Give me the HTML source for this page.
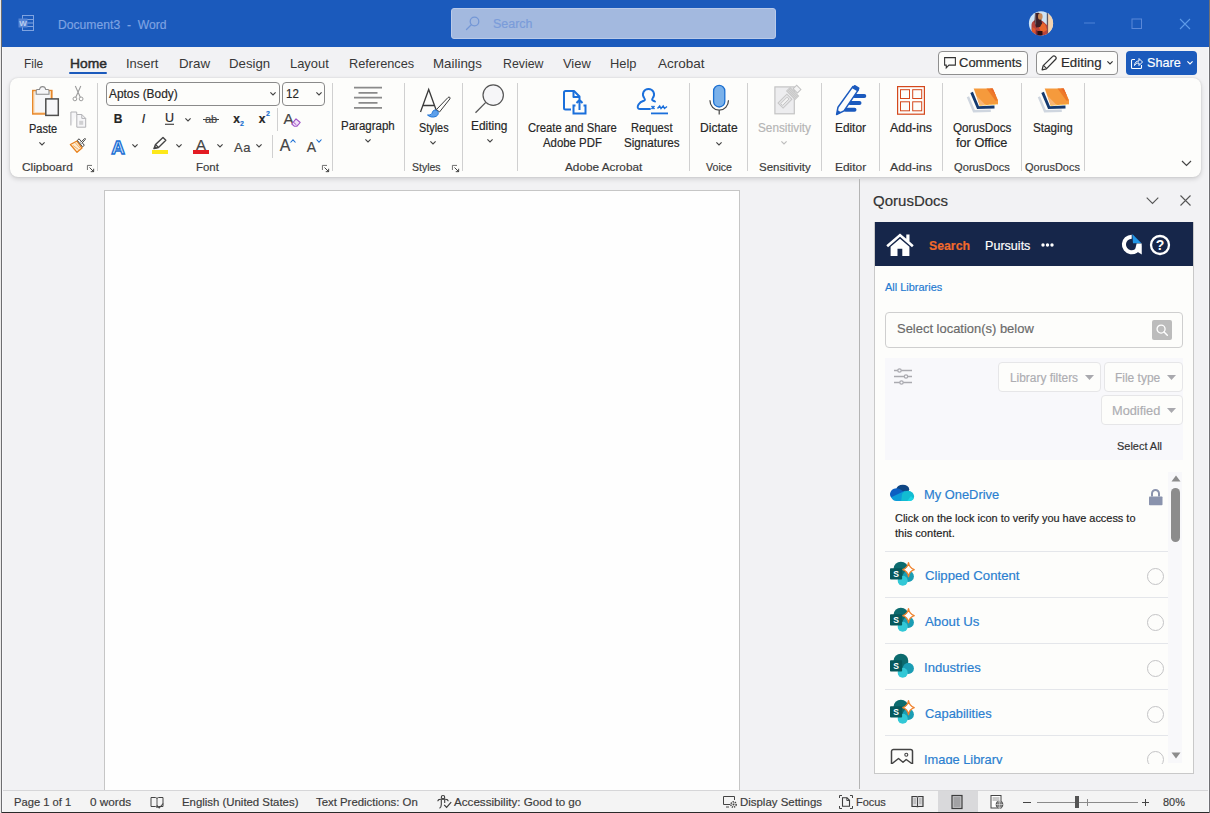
<!DOCTYPE html>
<html><head><meta charset="utf-8"><title>Document3 - Word</title>
<style>
*{box-sizing:border-box;margin:0;padding:0}
html,body{width:1210px;height:813px;overflow:hidden;background:#f2f2f4;font-family:"Liberation Sans",sans-serif;}
#win{position:absolute;left:0;top:0;width:1210px;height:813px;background:#f2f2f4;overflow:hidden}
.a{position:absolute;white-space:nowrap}
.t{position:absolute;white-space:nowrap;line-height:1;color:#262626;-webkit-text-stroke:.18px currentColor}
.chev{position:absolute;width:6px;height:3.600px}
svg{overflow:visible}
</style></head><body>
<div id="win"><div class="a" style="left:2px;top:0px;width:1207px;height:47px;background:#1b5abc"></div><svg class="a" style="left:18px;top:14px" width="17" height="18" viewBox="0 0 17 18"><rect x="4.500" y="1.500" width="11" height="15" fill="none" stroke="#7fa3e0" stroke-width="1"/><path d="M9 5.500h6M9 9h6M9 12.500h6" stroke="#7fa3e0" stroke-width="1"/><rect x="0.500" y="4.500" width="9" height="9" fill="#5584d4"/><text x="5" y="12" font-size="8" font-weight="bold" fill="#b9cdf0" text-anchor="middle" font-family="Liberation Sans, sans-serif">W</text></svg><span class="t " style="font-size:12.5px;top:25px;color:#7fa3e2;left:57.62px;transform-origin:0 50%;transform:translateY(-50%) scaleX(0.972);">Document3&nbsp; -&nbsp; Word</span><div class="a" style="left:451px;top:8px;width:325px;height:31px;background:#a3b9df;border:1px solid #b9cae9;border-radius:3px"></div><svg class="a" style="left:465px;top:15px" width="16" height="16" viewBox="0 0 16 16"><circle cx="9.500" cy="6.500" r="4.300" fill="none" stroke="#7497d6" stroke-width="1.300"/><path d="M6.300 9.700L1.500 14.500" stroke="#7497d6" stroke-width="1.300" stroke-linecap="round"/></svg><span class="t " style="font-size:12.5px;top:24px;color:#7a9cda;left:492.62px;transform-origin:0 50%;transform:translateY(-50%) scaleX(0.997);">Search</span><svg class="a" style="left:1027px;top:10px" width="28" height="27" viewBox="0 0 28 27"><defs><clipPath id="av"><circle cx="14" cy="13.400" r="12.100"/></clipPath></defs><g clip-path="url(#av)"><rect width="28" height="27" fill="#cfe4f5"/><rect x="21" y="0" width="7" height="27" fill="#f4d4b0"/><rect x="19.800" y="2" width="1.300" height="25" fill="#5c5560"/><path d="M4.500 27V15c0-3 2.500-5 5-5l6 1 5 4.500V27z" fill="#b8443c"/><path d="M12 12l6 2 2 6-5 3-3-5z" fill="#e8662c"/><path d="M5.500 17l3 2-1 4-2.500-1z" fill="#e0582a"/><path d="M9 20l6 3-1 4H9z" fill="#7a2a38"/><path d="M8 3.500c2-1.500 5-1 5.500 1l1.500 9-2 3.500-4 .5-1.500-6z" fill="#3c1f28"/><ellipse cx="13.300" cy="6.500" rx="2.300" ry="3.300" fill="#c98a58"/><path d="M10.500 21h5v4.500h-5z" fill="#2a1014"/><path d="M8.500 3.500v11" stroke="#6a5a60" stroke-width="1.200"/></g></svg><svg class="a" style="left:1084px;top:22px" width="12" height="2"><rect width="11" height="1" y="0.500" fill="#4f82d6"/></svg><svg class="a" style="left:1131px;top:18px" width="12" height="12"><rect x="1" y="1" width="9.500" height="9.500" fill="none" stroke="#5a88d8" stroke-width="1"/></svg><svg class="a" style="left:1179px;top:18px" width="12" height="12"><path d="M1 1l10 10M11 1L1 11" stroke="#5d9be8" stroke-width="1.100"/></svg><span class="t " style="font-size:13px;top:62.5px;color:#383838;left:24.11px;transform-origin:0 50%;transform:translateY(-50%) scaleX(0.916);-webkit-text-stroke:0;">File</span><span class="t " style="font-size:13px;top:62.5px;color:#383838;left:69.61px;transform-origin:0 50%;transform:translateY(-50%) scaleX(1.064);-webkit-text-stroke:.45px #1f1f1f;">Home</span><span class="t " style="font-size:13px;top:62.5px;color:#383838;left:126.11px;transform-origin:0 50%;transform:translateY(-50%) scaleX(0.992);-webkit-text-stroke:0;">Insert</span><span class="t " style="font-size:13px;top:62.5px;color:#383838;left:179.11px;transform-origin:0 50%;transform:translateY(-50%) scaleX(1.025);-webkit-text-stroke:0;">Draw</span><span class="t " style="font-size:13px;top:62.5px;color:#383838;left:229.11px;transform-origin:0 50%;transform:translateY(-50%) scaleX(1.018);-webkit-text-stroke:0;">Design</span><span class="t " style="font-size:13px;top:62.5px;color:#383838;left:290.11px;transform-origin:0 50%;transform:translateY(-50%) scaleX(0.993);-webkit-text-stroke:0;">Layout</span><span class="t " style="font-size:13px;top:62.5px;color:#383838;left:349.11px;transform-origin:0 50%;transform:translateY(-50%) scaleX(0.981);-webkit-text-stroke:0;">References</span><span class="t " style="font-size:13px;top:62.5px;color:#383838;left:433.11px;transform-origin:0 50%;transform:translateY(-50%) scaleX(1.026);-webkit-text-stroke:0;">Mailings</span><span class="t " style="font-size:13px;top:62.5px;color:#383838;left:503.11px;transform-origin:0 50%;transform:translateY(-50%) scaleX(0.947);-webkit-text-stroke:0;">Review</span><span class="t " style="font-size:13px;top:62.5px;color:#383838;left:563.11px;transform-origin:0 50%;transform:translateY(-50%) scaleX(0.991);-webkit-text-stroke:0;">View</span><span class="t " style="font-size:13px;top:62.5px;color:#383838;left:610.11px;transform-origin:0 50%;transform:translateY(-50%) scaleX(0.990);-webkit-text-stroke:0;">Help</span><span class="t " style="font-size:13px;top:62.5px;color:#383838;left:658.11px;transform-origin:0 50%;transform:translateY(-50%) scaleX(1.039);-webkit-text-stroke:0;">Acrobat</span><div class="a" style="left:69px;top:72px;width:38px;height:2px;background:#1b5abc;border-radius:1px"></div><div class="a" style="left:938px;top:51px;width:90px;height:24px;background:#fdfdfb;border:1px solid #8f8f8f;border-radius:4px"></div><svg class="a" style="left:942.500px;top:55.500px" width="14" height="14" viewBox="0 0 13 13"><path d="M1.500 1.500h10v7h-6l-2.500 2.500v-2.500h-1.500z" fill="none" stroke="#333" stroke-width="1"/></svg><span class="t " style="font-size:13px;top:62px;color:#2b2b2b;left:958.61px;transform-origin:0 50%;transform:translateY(-50%) scaleX(0.999);">Comments</span><div class="a" style="left:1036px;top:51px;width:82px;height:24px;background:#fdfdfb;border:1px solid #8f8f8f;border-radius:4px"></div><svg class="a" style="left:1040px;top:53.500px" width="18" height="18" viewBox="0 0 17 17"><path d="M2 15l1-4L12 2.200a1.600 1.600 0 0 1 2.300 0l.5.500a1.600 1.600 0 0 1 0 2.300L6 14z" fill="none" stroke="#333" stroke-width="1.200" stroke-linejoin="round"/><path d="M3.300 10.700l3 3" stroke="#333" stroke-width="1"/></svg><span class="t " style="font-size:13px;top:62px;color:#2b2b2b;left:1060.61px;transform-origin:0 50%;transform:translateY(-50%) scaleX(1.023);">Editing</span><svg class="chev" style="left:1106.5px;top:61.2px" viewBox="0 0 6 3.600"><path d="M.4.400l2.600 2.600 2.600-2.600" fill="none" stroke="#333" stroke-width="1.150"/></svg><div class="a" style="left:1126px;top:51px;width:71px;height:24px;background:#1b5abc;border-radius:4px"></div><svg class="a" style="left:1130px;top:56px" width="14" height="14" viewBox="0 0 14 14"><path d="M5 3.500H2.500a1 1 0 0 0-1 1v7a1 1 0 0 0 1 1h8a1 1 0 0 0 1-1V9" fill="none" stroke="#fff" stroke-width="1.100"/><path d="M4.500 9.500c.3-3 2-4.500 4.500-4.500V2.500L12.500 6 9 9.500V7c-2 0-3.300.6-4.500 2.500z" fill="none" stroke="#fff" stroke-width="1" stroke-linejoin="round"/></svg><span class="t " style="font-size:13px;top:62px;color:#fff;left:1146.61px;transform-origin:0 50%;transform:translateY(-50%) scaleX(0.970);">Share</span><svg class="chev" style="left:1186.5px;top:61.2px" viewBox="0 0 6 3.600"><path d="M.4.400l2.600 2.600 2.600-2.600" fill="none" stroke="#fff" stroke-width="1.150"/></svg><div class="a" style="left:10px;top:78px;width:1191px;height:99px;background:#fdfdfb;border-radius:8px;box-shadow:0 2px 5px rgba(0,0,0,.15),0 0 2px rgba(0,0,0,.12)"></div><div class="a" style="left:97px;top:83px;width:1px;height:88px;background:#d0d0d0"></div><div class="a" style="left:332px;top:83px;width:1px;height:88px;background:#d0d0d0"></div><div class="a" style="left:404px;top:83px;width:1px;height:88px;background:#d0d0d0"></div><div class="a" style="left:462px;top:83px;width:1px;height:88px;background:#d0d0d0"></div><div class="a" style="left:517px;top:83px;width:1px;height:88px;background:#d0d0d0"></div><div class="a" style="left:689px;top:83px;width:1px;height:88px;background:#d0d0d0"></div><div class="a" style="left:747px;top:83px;width:1px;height:88px;background:#d0d0d0"></div><div class="a" style="left:821px;top:83px;width:1px;height:88px;background:#d0d0d0"></div><div class="a" style="left:879px;top:83px;width:1px;height:88px;background:#d0d0d0"></div><div class="a" style="left:942px;top:83px;width:1px;height:88px;background:#d0d0d0"></div><div class="a" style="left:1021px;top:83px;width:1px;height:88px;background:#d0d0d0"></div><div class="a" style="left:1084px;top:83px;width:1px;height:88px;background:#d0d0d0"></div><span class="t " style="font-size:11.5px;top:168.4px;color:#3b3b3b;left:22.46px;transform-origin:0 50%;transform:translateY(-50%) scaleX(1.031);">Clipboard</span><span class="t " style="font-size:11.5px;top:168.4px;color:#3b3b3b;left:195.66px;transform-origin:0 50%;transform:translateY(-50%) scaleX(0.993);">Font</span><span class="t " style="font-size:11.5px;top:168.4px;color:#3b3b3b;left:411.65px;transform-origin:0 50%;transform:translateY(-50%) scaleX(0.914);">Styles</span><span class="t " style="font-size:11.5px;top:168.4px;color:#3b3b3b;left:564.65px;transform-origin:0 50%;transform:translateY(-50%) scaleX(1.024);">Adobe Acrobat</span><span class="t " style="font-size:11.5px;top:168.4px;color:#3b3b3b;left:705.65px;transform-origin:0 50%;transform:translateY(-50%) scaleX(0.922);">Voice</span><span class="t " style="font-size:11.5px;top:168.4px;color:#3b3b3b;left:758.86px;transform-origin:0 50%;transform:translateY(-50%) scaleX(0.997);">Sensitivity</span><span class="t " style="font-size:11.5px;top:168.4px;color:#3b3b3b;left:835.36px;transform-origin:0 50%;transform:translateY(-50%) scaleX(1.038);">Editor</span><span class="t " style="font-size:11.5px;top:168.4px;color:#3b3b3b;left:890.25px;transform-origin:0 50%;transform:translateY(-50%) scaleX(1.073);">Add-ins</span><span class="t " style="font-size:11.5px;top:168.4px;color:#3b3b3b;left:953.65px;transform-origin:0 50%;transform:translateY(-50%) scaleX(0.971);">QorusDocs</span><span class="t " style="font-size:11.5px;top:168.4px;color:#3b3b3b;left:1025.15px;transform-origin:0 50%;transform:translateY(-50%) scaleX(0.954);">QorusDocs</span><svg class="a" style="left:86.5px;top:164.5px" width="7.500" height="7.500" viewBox="0 0 9 9"><path d="M.5 6V.500H6" fill="none" stroke="#555" stroke-width="1"/><path d="M3 3l5 5M8 4.500V8H4.500" fill="none" stroke="#333" stroke-width="1.100"/></svg><svg class="a" style="left:321.5px;top:164.5px" width="7.500" height="7.500" viewBox="0 0 9 9"><path d="M.5 6V.500H6" fill="none" stroke="#555" stroke-width="1"/><path d="M3 3l5 5M8 4.500V8H4.500" fill="none" stroke="#333" stroke-width="1.100"/></svg><svg class="a" style="left:451.5px;top:164.5px" width="7.500" height="7.500" viewBox="0 0 9 9"><path d="M.5 6V.500H6" fill="none" stroke="#555" stroke-width="1"/><path d="M3 3l5 5M8 4.500V8H4.500" fill="none" stroke="#333" stroke-width="1.100"/></svg><svg class="a" style="left:1181px;top:160px" width="11" height="7" viewBox="0 0 11 7"><path d="M1 1l4.500 4.500L10 1" fill="none" stroke="#444" stroke-width="1.200"/></svg><svg class="a" style="left:31px;top:85px" width="29" height="32" viewBox="0 0 29 32"><rect x="1.800" y="5.600" width="19" height="23.300" fill="#f6f6f8" stroke="#e8882a" stroke-width="1.600"/><rect x="3.100" y="6.900" width="16.400" height="20.700" fill="none" stroke="#fbd9b0" stroke-width="1"/><path d="M5.200 9.200V5.500c0-.6.400-1 1-1h2.300c.3-1.700 1.500-2.900 3.100-2.900s2.800 1.200 3.100 2.900h2.300c.6 0 1 .4 1 1v3.700z" fill="#f6f6f8" stroke="#8a8a8a" stroke-width="1.100"/><rect x="14.800" y="13.900" width="12.500" height="16.500" fill="#f7f7f9" stroke="#4f4f4f" stroke-width="1.500"/></svg><span class="t " style="font-size:12px;top:128.5px;left:29.34px;transform-origin:0 50%;transform:translateY(-50%) scaleX(0.918);">Paste</span><svg class="chev" style="left:39px;top:141.89999999999998px" viewBox="0 0 6 3.600"><path d="M.4.400l2.600 2.600 2.600-2.600" fill="none" stroke="#444" stroke-width="1.150"/></svg><svg class="a" style="left:71px;top:85px" width="14" height="17" viewBox="0 0 14 17"><path d="M4.300 1L9.300 12.300M9.800 1L4.800 12.300" stroke="#9c9c9c" stroke-width="1.100" fill="none"/><circle cx="3.900" cy="13.900" r="1.900" fill="none" stroke="#9c9c9c" stroke-width="1"/><circle cx="10.100" cy="13.900" r="1.900" fill="none" stroke="#9c9c9c" stroke-width="1"/></svg><svg class="a" style="left:69px;top:110px" width="18" height="18" viewBox="0 0 18 18"><path d="M1.900 15.500V2h5.800v2.500" fill="#f6f6f8" stroke="#b2b2b6" stroke-width="1"/><path d="M7.800 17.200V4.500h5l3.900 3.900v8.800z" fill="#f6f6f8" stroke="#b2b2b6" stroke-width="1"/><path d="M12.800 4.500v3.900h3.900" fill="none" stroke="#b2b2b6" stroke-width="1"/><rect x="10.200" y="10.800" width="4" height="4" fill="#d0d0d2"/></svg><svg class="a" style="left:69px;top:136px" width="18" height="17" viewBox="0 0 18 17"><path d="M1.400 8.500L8 5l5 7-5 4.300z" fill="#fdebd0" stroke="#e8821e" stroke-width="1.300" stroke-linejoin="round"/><path d="M4 9.500l5.500 4M6.500 7l4.500 5" stroke="#f0a050" stroke-width=".8"/><path d="M8.300 4.300l5.200 6.500 1.800-1.500-5.200-6.500z" fill="#fdfdfb" stroke="#4a4a4a" stroke-width="1"/><path d="M11.600 6.400l4-3.800c.5-.5 1.300.3.800.8l-3.700 4.100" fill="#fdfdfb" stroke="#4a4a4a" stroke-width="1"/></svg><div class="a" style="left:106px;top:82px;width:174px;height:24px;border:1px solid #8a8a8a;border-radius:4px;background:#fdfdfb"></div><span class="t " style="font-size:12.5px;top:94px;left:109.12px;transform-origin:0 50%;transform:translateY(-50%) scaleX(0.950);">Aptos (Body)</span><svg class="chev" style="left:270px;top:92.2px" viewBox="0 0 6 3.600"><path d="M.4.400l2.600 2.600 2.600-2.600" fill="none" stroke="#444" stroke-width="1.150"/></svg><div class="a" style="left:282px;top:82px;width:43px;height:24px;border:1px solid #8a8a8a;border-radius:4px;background:#fdfdfb"></div><span class="t " style="font-size:12.5px;top:94px;left:285.62px;transform-origin:0 50%;transform:translateY(-50%) scaleX(0.921);">12</span><svg class="chev" style="left:315.5px;top:92.2px" viewBox="0 0 6 3.600"><path d="M.4.400l2.600 2.600 2.600-2.600" fill="none" stroke="#444" stroke-width="1.150"/></svg><span class="t " style="font-size:12px;top:118.5px;left:118px;transform:translate(-50%,-50%) scaleX(1.000);font-weight:bold;">B</span><span class="t " style="font-size:12.5px;top:118.5px;left:143.5px;transform:translate(-50%,-50%) scaleX(1.000);font-style:italic;">I</span><span class="t " style="font-size:12.5px;top:118px;left:169.5px;transform:translate(-50%,-50%) scaleX(1.000);text-decoration:underline;text-underline-offset:2px;">U</span><svg class="chev" style="left:185px;top:117.7px" viewBox="0 0 6 3.600"><path d="M.4.400l2.600 2.600 2.600-2.600" fill="none" stroke="#444" stroke-width="1.150"/></svg><span class="t " style="font-size:11px;top:118.5px;color:#444;left:211px;transform:translate(-50%,-50%) scaleX(1.000);">ab</span><div class="a" style="left:203px;top:119px;width:16px;height:1px;background:#444"></div><span class="t " style="font-size:12px;top:118.5px;left:236.5px;transform:translate(-50%,-50%) scaleX(1.000);font-weight:bold;">x</span><span class="t " style="font-size:7px;top:123px;color:#1b6fd0;left:242px;transform:translate(-50%,-50%) scaleX(1.000);font-weight:bold;">2</span><span class="t " style="font-size:12px;top:118.5px;left:262px;transform:translate(-50%,-50%) scaleX(1.000);font-weight:bold;">x</span><span class="t " style="font-size:7px;top:113px;color:#1b6fd0;left:268px;transform:translate(-50%,-50%) scaleX(1.000);font-weight:bold;">2</span><div class="a" style="left:277px;top:108px;width:1px;height:23px;background:#d0d0d0"></div><span class="t " style="font-size:15px;top:117.5px;color:#444;left:288.5px;transform:translate(-50%,-50%) scaleX(1.000);">A</span><svg class="a" style="left:291px;top:118px" width="10" height="9" viewBox="0 0 10 9"><path d="M5 .8L9.200 4.500 6 8.200H3.200L.8 6z" fill="#f1e0f8" stroke="#a055c8" stroke-width="1.100" stroke-linejoin="round"/><path d="M2.600 4.300L5.500 7" stroke="#a055c8" stroke-width="1"/></svg><span class="t " style="font-size:19px;top:146.5px;color:#cfe4fb;left:118px;transform:translate(-50%,-50%) scaleX(1.000);font-weight:bold;-webkit-text-stroke:1.300px #1a6fd4;">A</span><svg class="chev" style="left:131.5px;top:144.0px" viewBox="0 0 6 3.600"><path d="M.4.400l2.600 2.600 2.600-2.600" fill="none" stroke="#444" stroke-width="1.150"/></svg><svg class="a" style="left:152px;top:136px" width="17" height="14" viewBox="0 0 17 14"><path d="M2 12.500l1.500-4L11 1.500l2.800 2.800L6.500 11.500z" fill="none" stroke="#444" stroke-width="1.400" stroke-linejoin="round"/><path d="M3.500 8.500l3 3" stroke="#444" stroke-width="1.200"/><path d="M1.500 13l3.800-.8-2.300-2.300z" fill="#444"/></svg><div class="a" style="left:152px;top:150px;width:16px;height:4px;background:#fde81a"></div><svg class="chev" style="left:175.5px;top:144.0px" viewBox="0 0 6 3.600"><path d="M.4.400l2.600 2.600 2.600-2.600" fill="none" stroke="#444" stroke-width="1.150"/></svg><span class="t " style="font-size:15px;top:143.5px;color:#444;left:201px;transform:translate(-50%,-50%) scaleX(1.000);">A</span><div class="a" style="left:193px;top:150px;width:16px;height:4px;background:#e31b23"></div><svg class="chev" style="left:216.5px;top:144.0px" viewBox="0 0 6 3.600"><path d="M.4.400l2.600 2.600 2.600-2.600" fill="none" stroke="#444" stroke-width="1.150"/></svg><span class="t " style="font-size:13px;top:146.5px;color:#444;left:242.5px;transform:translate(-50%,-50%) scaleX(1.000);letter-spacing:.5px;">Aa</span><svg class="chev" style="left:256px;top:144.0px" viewBox="0 0 6 3.600"><path d="M.4.400l2.600 2.600 2.600-2.600" fill="none" stroke="#444" stroke-width="1.150"/></svg><div class="a" style="left:272px;top:135px;width:1px;height:23px;background:#d0d0d0"></div><span class="t " style="font-size:16px;top:146px;color:#444;left:285px;transform:translate(-50%,-50%) scaleX(1.000);">A</span><svg class="a" style="left:290px;top:139px" width="6" height="4" viewBox="0 0 6 4"><path d="M.5 3.500L3 .800l2.500 2.700" fill="none" stroke="#1a6fd4" stroke-width="1.100"/></svg><span class="t " style="font-size:14px;top:147px;color:#444;left:311.5px;transform:translate(-50%,-50%) scaleX(1.000);">A</span><svg class="a" style="left:316px;top:139px" width="6" height="4" viewBox="0 0 6 4"><path d="M.5.500L3 3.200 5.500.500" fill="none" stroke="#1a6fd4" stroke-width="1.100"/></svg><svg class="a" style="left:354px;top:86px" width="28" height="24" viewBox="0 0 28 24"><path d="M0 1.700h28M4.500 6.900h19M0 11.600h28M4.500 16.800h19M0 21.800h28" stroke="#8a8a8a" stroke-width="1.700"/></svg><span class="t " style="font-size:12px;top:125.8px;left:341.14px;transform-origin:0 50%;transform:translateY(-50%) scaleX(0.958);">Paragraph</span><svg class="chev" style="left:364.5px;top:139.39999999999998px" viewBox="0 0 6 3.600"><path d="M.4.400l2.600 2.600 2.600-2.600" fill="none" stroke="#444" stroke-width="1.150"/></svg><svg class="a" style="left:418px;top:86px" width="34" height="32" viewBox="0 0 34 32"><path d="M2.500 26L10.700 3.500 18.500 25M5 19.500h11" fill="none" stroke="#3b3b3b" stroke-width="1.300"/><path d="M18.500 23.500L30 11.500c1.300-1.300 2.800.2 1.800 1.500L21.500 26z" fill="#fdfdfb" stroke="#3b3b3b" stroke-width="1"/><path d="M9.500 29c3 .3 4.500-1 5-3 .6-2.300 3.500-2.600 5-1 1.600 1.700.8 4.300-1.500 5.400-3 1.400-6.500.6-8.500-1.400z" fill="#5ea0ea" stroke="#1a6fd4" stroke-width=".9"/></svg><span class="t " style="font-size:12px;top:127.8px;left:419.14px;transform-origin:0 50%;transform:translateY(-50%) scaleX(0.905);">Styles</span><svg class="chev" style="left:430.3px;top:140.89999999999998px" viewBox="0 0 6 3.600"><path d="M.4.400l2.600 2.600 2.600-2.600" fill="none" stroke="#444" stroke-width="1.150"/></svg><svg class="a" style="left:474px;top:83px" width="32" height="32" viewBox="0 0 32 32"><circle cx="19.200" cy="12.100" r="10.200" fill="#f6f6f8" stroke="#555" stroke-width="1.200"/><path d="M11.800 19.400L1.500 29.800" stroke="#555" stroke-width="1.300"/></svg><span class="t " style="font-size:12px;top:125.8px;left:471.24px;transform-origin:0 50%;transform:translateY(-50%) scaleX(0.991);">Editing</span><svg class="chev" style="left:486.5px;top:139.39999999999998px" viewBox="0 0 6 3.600"><path d="M.4.400l2.600 2.600 2.600-2.600" fill="none" stroke="#444" stroke-width="1.150"/></svg><svg class="a" style="left:562px;top:89px" width="26" height="26" viewBox="0 0 26 26"><path d="M9 20.500H3.500a1.500 1.500 0 0 1-1.500-1.500V3.500A1.500 1.500 0 0 1 3.500 2H12l5.500 5.500v3" fill="none" stroke="#1a6fdb" stroke-width="2" stroke-linejoin="round"/><path d="M11.500 2v6h6" fill="none" stroke="#1a6fdb" stroke-width="2" stroke-linejoin="round"/><path d="M13.500 16.500h-2v8h12v-8h-2" fill="none" stroke="#1a6fdb" stroke-width="2"/><path d="M17.500 21v-10M14.500 14l3-3 3 3" fill="none" stroke="#1a6fdb" stroke-width="2"/></svg><span class="t " style="font-size:12px;top:127.5px;left:528.24px;transform-origin:0 50%;transform:translateY(-50%) scaleX(0.936);">Create and Share</span><span class="t " style="font-size:12px;top:143.2px;left:543.44px;transform-origin:0 50%;transform:translateY(-50%) scaleX(0.949);">Adobe PDF</span><svg class="a" style="left:636px;top:85px" width="34" height="30" viewBox="0 0 34 30"><path d="M14 24H4c-2.500 0-3-2-1.500-4.500 1.200-2 3.700-3.300 5.800-4 .8-.3.800-1.300.2-2-1.500-1.800-2-4.500-1-6.500 2-4 8-4 10 0 1 2 .5 4.700-1 6.500-.6.700-.5 1.600.3 2 .8.300 1.500.6 2.200 1" fill="none" stroke="#1a6fdb" stroke-width="1.900" stroke-linecap="round"/><path d="M15.500 21l3 3M18.500 21l-3 3" stroke="#1a6fdb" stroke-width="1.500"/><path d="M21.500 23.500l2.200-2.500 1.300 2.500 2.200-2.500 1.300 2.500 2.500-2" fill="none" stroke="#1a6fdb" stroke-width="1.400"/><path d="M15 28.400h17" stroke="#1a6fdb" stroke-width="1.800"/></svg><span class="t " style="font-size:12px;top:127.5px;left:631.24px;transform-origin:0 50%;transform:translateY(-50%) scaleX(0.928);">Request</span><span class="t " style="font-size:12px;top:143.2px;left:623.64px;transform-origin:0 50%;transform:translateY(-50%) scaleX(0.970);">Signatures</span><svg class="a" style="left:708px;top:84px" width="22" height="32" viewBox="0 0 22 32"><rect x="5.600" y="1.400" width="11.200" height="21.600" rx="5.600" fill="#7ab1ea" stroke="#1b6fd0" stroke-width="1.300"/><path d="M1.900 16.300a9.100 9.700 0 0 0 18.600 0M11.200 26v4.400" fill="none" stroke="#444" stroke-width="1.200"/></svg><span class="t " style="font-size:12px;top:128.3px;left:700.24px;transform-origin:0 50%;transform:translateY(-50%) scaleX(1.007);">Dictate</span><svg class="chev" style="left:715.5px;top:141.7px" viewBox="0 0 6 3.600"><path d="M.4.400l2.600 2.600 2.600-2.600" fill="none" stroke="#444" stroke-width="1.150"/></svg><svg class="a" style="left:772px;top:84px" width="32" height="32" viewBox="0 0 32 32"><rect x="2.900" y="2.900" width="19.400" height="26.900" fill="#ededef" stroke="#c4c4c4" stroke-width="1.200"/><g transform="translate(12.800 17.300) rotate(-45)"><rect x="-6" y="-3.600" width="12.500" height="7.200" fill="#e4e4e6" stroke="#c6c6c6" stroke-width="1"/><rect x="-4.500" y="-1.300" width="9" height="2.600" fill="#f4f4f4" stroke="#c2c2c2" stroke-width=".9"/><rect x="8" y="-6.500" width="6" height="13" fill="#c9c9c9"/><path d="M9.500 -5.800v11.600M11 -5.800v11.600M12.500 -5.800v11.600" stroke="#dcdcdc" stroke-width=".6"/><rect x="14.800" y="-3" width="5" height="6" fill="#f4f4f4" stroke="#c4c4c4" stroke-width="1"/></g></svg><span class="t " style="font-size:12px;top:127.5px;color:#b5b5b5;left:757.84px;transform-origin:0 50%;transform:translateY(-50%) scaleX(0.981);">Sensitivity</span><svg class="chev" style="left:781.3px;top:140.89999999999998px" viewBox="0 0 6 3.600"><path d="M.4.400l2.600 2.600 2.600-2.600" fill="none" stroke="#bdbdbd" stroke-width="1.150"/></svg><svg class="a" style="left:835px;top:84px" width="32" height="32" viewBox="0 0 32 32"><path d="M19.500 11.900h9.800M15 19h9.500M10.500 25.800h9" stroke="#1b5abe" stroke-width="4" stroke-linecap="round"/><path d="M1.600 30.500l1.400-7.300L17.800 2.600l5.500 3.300L9 26.800z" fill="#fdfdfb" stroke="#1b5abe" stroke-width="1.500" stroke-linejoin="round"/><path d="M1.600 30.500l.9-4.500 3.500 2.300z" fill="#1b5abe"/><path d="M16.800 4l1.700-2.300c.5-.7 1.300-.8 2-.4l3.300 2c.7.4.9 1.200.4 1.900L22.700 7.500z" fill="#1b5abe"/></svg><span class="t " style="font-size:12px;top:127.5px;left:835.24px;transform-origin:0 50%;transform:translateY(-50%) scaleX(0.986);">Editor</span><svg class="a" style="left:897px;top:86px" width="28" height="29" viewBox="0 0 28 29"><rect x=".6" y=".6" width="26.800" height="27.600" fill="none" stroke="#d4481c" stroke-width="1.200"/><rect x="3.500" y="3.700" width="9" height="8.800" fill="none" stroke="#d4481c"/><rect x="15.700" y="3.700" width="9" height="8.800" fill="none" stroke="#d4481c"/><rect x="3.500" y="15.800" width="9" height="9" fill="none" stroke="#d4481c"/><rect x="15.700" y="15.800" width="9" height="9" fill="none" stroke="#d4481c"/></svg><span class="t " style="font-size:12px;top:127.5px;left:890.04px;transform-origin:0 50%;transform:translateY(-50%) scaleX(1.031);">Add-ins</span><svg class="a" style="left:966px;top:86px" width="34" height="28" viewBox="0 0 34 28"><path d="M1.900 10.700L8 25.300l16.800-.6" fill="none" stroke="#cfd6df" stroke-width="2.500"/><path d="M5.600 6.400L12 21.600l16.500-.6" fill="none" stroke="#143a70" stroke-width="2.800"/><path d="M7.700 2.400H26.700L32 14.500v3.700L13.700 19.400z" fill="#f59a3c"/><path d="M20.500 2.400h6.200L32 14.500l-2.500.2z" fill="#ee7a2a"/><path d="M24.200 2.400h2.500l3.400 7.700z" fill="#e9682a"/><path d="M10.700 10l3 9.400 6-.4z" fill="#f6b575"/><path d="M13.700 19.400L32 18.200" stroke="#fbe04a" stroke-width=".7" stroke-dasharray="2 2.500"/></svg><span class="t " style="font-size:12px;top:127.5px;left:952.64px;transform-origin:0 50%;transform:translateY(-50%) scaleX(0.973);">QorusDocs</span><span class="t " style="font-size:12px;top:143px;left:956.34px;transform-origin:0 50%;transform:translateY(-50%) scaleX(1.060);">for Office</span><svg class="a" style="left:1037px;top:86px" width="34" height="28" viewBox="0 0 34 28"><path d="M1.900 10.700L8 25.300l16.800-.6" fill="none" stroke="#cfd6df" stroke-width="2.500"/><path d="M5.600 6.400L12 21.600l16.500-.6" fill="none" stroke="#143a70" stroke-width="2.800"/><path d="M7.700 2.400H26.700L32 14.500v3.700L13.700 19.400z" fill="#f59a3c"/><path d="M20.500 2.400h6.200L32 14.500l-2.500.2z" fill="#ee7a2a"/><path d="M24.200 2.400h2.500l3.400 7.700z" fill="#e9682a"/><path d="M10.700 10l3 9.400 6-.4z" fill="#f6b575"/><path d="M13.700 19.400L32 18.200" stroke="#fbe04a" stroke-width=".7" stroke-dasharray="2 2.500"/></svg><span class="t " style="font-size:12px;top:127.5px;left:1032.94px;transform-origin:0 50%;transform:translateY(-50%) scaleX(0.975);">Staging</span><div class="a" style="left:104px;top:190px;width:636px;height:600px;background:#fefefe;border:1px solid #c6c6c6;border-bottom:none"></div><div class="a" style="left:859px;top:179px;width:1px;height:610px;background:#b4b4b4"></div><span class="t " style="font-size:15px;top:200px;color:#333;left:872.55px;transform-origin:0 50%;transform:translateY(-50%) scaleX(1.001);">QorusDocs</span><svg class="a" style="left:1146px;top:197px" width="13" height="8" viewBox="0 0 13 8"><path d="M.7.700l5.800 5.800L12.300.700" fill="none" stroke="#555" stroke-width="1.100"/></svg><svg class="a" style="left:1180px;top:195px" width="11" height="11" viewBox="0 0 11 11"><path d="M.5.500l10 10M10.500.500l-10 10" stroke="#555" stroke-width="1.100"/></svg><div class="a" style="left:874px;top:222px;width:320px;height:552px;background:#fdfdfb;border:1px solid #c9c9c9;border-top:none"></div><div class="a" style="left:1168px;top:472px;width:14px;height:291px;background:#f8f8fa"></div><div class="a" style="left:875px;top:222px;width:318px;height:44px;background:#16264a"></div><svg class="a" style="left:885.500px;top:232.500px" width="28" height="24" viewBox="0 0 28 24"><path d="M14 .4L.3 12.300l1.700 1.900L14 3.800l12 10.400 1.700-1.900-4.200-3.700V1.500h-3.200v4.300z" fill="#fff"/><path d="M4.600 13.800L14 5.700l9.400 8.100v9.100h-7.100v-7.200h-4.800v7.200H4.600z" fill="#fff"/></svg><span class="t " style="font-size:13px;top:244.5px;color:#f26a2b;left:928.91px;transform-origin:0 50%;transform:translateY(-50%) scaleX(0.945);font-weight:bold;">Search</span><span class="t " style="font-size:13px;top:244.5px;color:#fff;left:985.11px;transform-origin:0 50%;transform:translateY(-50%) scaleX(0.967);">Pursuits</span><svg class="a" style="left:1041px;top:243px" width="13" height="4" viewBox="0 0 13 4"><circle cx="2" cy="2" r="1.700" fill="#fff"/><circle cx="6.500" cy="2" r="1.700" fill="#fff"/><circle cx="11" cy="2" r="1.700" fill="#fff"/></svg><svg class="a" style="left:1120px;top:233px" width="24" height="24" viewBox="0 0 24 24"><path d="M11.700 3.700A7.800 7.800 0 1 0 19.300 13.300" fill="none" stroke="#fff" stroke-width="4.100"/><path d="M12.300 1l9.200 9.300h-8.500z" fill="#2196e8"/><path d="M16.600 10.600h5.100l.1 11-6.800-4.300z" fill="#fff"/></svg><svg class="a" style="left:1149px;top:234px" width="22" height="22" viewBox="0 0 22 22"><circle cx="11" cy="11" r="9" fill="none" stroke="#fff" stroke-width="2.300"/><text x="11" y="16" font-size="14" font-weight="bold" fill="#fff" text-anchor="middle" font-family="Liberation Sans, sans-serif">?</text></svg><span class="t " style="font-size:11px;top:287px;color:#1f7ad1;left:885.17px;transform-origin:0 50%;transform:translateY(-50%) scaleX(0.996);">All Libraries</span><div class="a" style="left:885px;top:312px;width:298px;height:36px;background:#fdfdfb;border:1px solid #cfcfcf;border-radius:4px"></div><span class="t " style="font-size:13px;top:327.5px;color:#6a6a6a;left:896.61px;transform-origin:0 50%;transform:translateY(-50%) scaleX(0.996);">Select location(s) below</span><div class="a" style="left:1152px;top:320px;width:20px;height:19.5px;background:#bcbcbc;border-radius:2px"></div><svg class="a" style="left:1155px;top:322.500px" width="14" height="14" viewBox="0 0 15 15"><circle cx="6.500" cy="6.500" r="4.300" fill="none" stroke="#fff" stroke-width="1.400"/><path d="M9.700 9.700l3.500 3.500" stroke="#fff" stroke-width="1.600" stroke-linecap="round"/></svg><div class="a" style="left:885px;top:358px;width:298px;height:102px;background:#f8f8fb"></div><svg class="a" style="left:894px;top:368px" width="19" height="17" viewBox="0 0 19 17"><path d="M0 2.500h18M0 8.500h18M0 14.500h18" stroke="#aaaab0" stroke-width="1.400"/><circle cx="5.500" cy="2.500" r="1.700" fill="#f8f8fb" stroke="#aaaab0" stroke-width="1.200"/><circle cx="12" cy="8.500" r="1.700" fill="#f8f8fb" stroke="#aaaab0" stroke-width="1.200"/><circle cx="7.500" cy="14.500" r="1.700" fill="#f8f8fb" stroke="#aaaab0" stroke-width="1.200"/></svg><div class="a" style="left:998px;top:362px;width:103px;height:30px;background:#fdfdfb;border:1px solid #e6e6e8;border-radius:4px"></div><span class="t " style="font-size:12px;top:377.5px;color:#adadb2;left:1009.64px;transform-origin:0 50%;transform:translateY(-50%) scaleX(0.991);">Library filters</span><svg class="a" style="left:1085px;top:375px" width="9" height="5" viewBox="0 0 9 5"><path d="M0 0h9L4.500 5z" fill="#a9a9ae"/></svg><div class="a" style="left:1104px;top:362px;width:79px;height:30px;background:#fdfdfb;border:1px solid #e6e6e8;border-radius:4px"></div><span class="t " style="font-size:12px;top:377.5px;color:#adadb2;left:1114.64px;transform-origin:0 50%;transform:translateY(-50%) scaleX(0.997);">File type</span><svg class="a" style="left:1167px;top:375px" width="9" height="5" viewBox="0 0 9 5"><path d="M0 0h9L4.500 5z" fill="#a9a9ae"/></svg><div class="a" style="left:1101px;top:395px;width:82px;height:30px;background:#fdfdfb;border:1px solid #e6e6e8;border-radius:4px"></div><span class="t " style="font-size:12px;top:410.5px;color:#adadb2;left:1111.64px;transform-origin:0 50%;transform:translateY(-50%) scaleX(1.064);">Modified</span><svg class="a" style="left:1167px;top:408px" width="9" height="5" viewBox="0 0 9 5"><path d="M0 0h9L4.500 5z" fill="#a9a9ae"/></svg><span class="t " style="font-size:11px;top:446px;color:#333;left:1116.67px;transform-origin:0 50%;transform:translateY(-50%) scaleX(0.995);">Select All</span><svg class="a" style="left:1171px;top:475px" width="10" height="7" viewBox="0 0 10 7"><path d="M5 .5L9.500 6.500H.5z" fill="#8c8c8c"/></svg><div class="a" style="left:1171px;top:488px;width:9px;height:54px;background:#8c8c8c;border-radius:4.500px"></div><svg class="a" style="left:1171px;top:752px" width="10" height="7" viewBox="0 0 10 7"><path d="M5 6.500L9.500 .5H.5z" fill="#8c8c8c"/></svg><svg class="a" style="left:889px;top:484px" width="26" height="18" viewBox="0 0 26 18"><ellipse cx="13.800" cy="5.300" rx="6.400" ry="4.600" fill="#0e4583"/><path d="M1 10.600C1 7 4 4.200 7.500 4.200c2 0 3.500.8 4.600 1.800L18 9.500 5 15c-2.500-.8-4-2.400-4-4.400z" fill="#0c5fc2"/><path d="M2.200 13.200L16.500 6.600 14 16.900H7.200c-2.200 0-4.200-1.500-5-3.700z" fill="#0c9cd8"/><path d="M12.200 16.900l.8-6.700c1.100-2.300 3.500-3.600 6.100-3.400 3.400.3 6 2.700 6 5.800 0 2.400-1.900 4.300-4.300 4.300z" fill="#12bcd2"/><path d="M18.300 16.900l3.700-5 2.600 2.800c-.7 1.400-2.100 2.200-3.800 2.200z" fill="#19d6e4"/></svg><span class="t " style="font-size:13px;top:494.2px;color:#2b7fd0;left:924.21px;transform-origin:0 50%;transform:translateY(-50%) scaleX(0.991);">My OneDrive</span><svg class="a" style="left:1148px;top:488px" width="15" height="18" viewBox="0 0 15 18"><path d="M4 8.500V5.500a3.500 3.500 0 0 1 7 0v3" fill="none" stroke="#8a93ad" stroke-width="2"/><rect x="1" y="8.500" width="13.500" height="8.800" rx=".8" fill="#8a93ad"/></svg><span class="t " style="font-size:11.5px;top:519px;color:#222;left:895.05px;transform-origin:0 50%;transform:translateY(-50%) scaleX(0.950);">Click on the lock icon to verify you have access to</span><span class="t " style="font-size:11.5px;top:534px;color:#222;left:895.05px;transform-origin:0 50%;transform:translateY(-50%) scaleX(0.963);">this content.</span><div class="a" style="left:885px;top:550.5px;width:283px;height:1px;background:#e4e6ea"></div><svg class="a" style="left:889px;top:561px" width="26" height="26" viewBox="0 0 26 26"><circle cx="11.900" cy="8.100" r="7.400" fill="#0c6b6e"/><circle cx="19.300" cy="15.400" r="5.600" fill="#1a9db4"/><circle cx="13.700" cy="19.700" r="5" fill="#32c8d6"/><rect x="1" y="7.200" width="12.100" height="11.400" rx=".8" fill="#06585c"/><text x="7" y="16.200" font-size="8.500" font-weight="bold" fill="#fff" text-anchor="middle" font-family="Liberation Sans, sans-serif">S</text><path d="M19.500 1.700c.6 4 1.800 5.600 5.700 7-3.900 1.300-5.100 3-5.700 7-.6-4-1.900-5.700-5.700-7 3.800-1.400 5.100-3 5.700-7z" fill="#fff" stroke="#f0822c" stroke-width="1.300" stroke-linejoin="round"/></svg><span class="t " style="font-size:13px;top:575px;color:#2b7fd0;left:925.11px;transform-origin:0 50%;transform:translateY(-50%) scaleX(1.013);">Clipped Content</span><div class="a" style="left:1147.0px;top:567.5px;width:17px;height:17px;border:1.300px solid #c4c4c6;border-radius:50%"></div><div class="a" style="left:885px;top:596.5px;width:283px;height:1px;background:#e4e6ea"></div><svg class="a" style="left:889px;top:607px" width="26" height="26" viewBox="0 0 26 26"><circle cx="11.900" cy="8.100" r="7.400" fill="#0c6b6e"/><circle cx="19.300" cy="15.400" r="5.600" fill="#1a9db4"/><circle cx="13.700" cy="19.700" r="5" fill="#32c8d6"/><rect x="1" y="7.200" width="12.100" height="11.400" rx=".8" fill="#06585c"/><text x="7" y="16.200" font-size="8.500" font-weight="bold" fill="#fff" text-anchor="middle" font-family="Liberation Sans, sans-serif">S</text><path d="M19.500 1.700c.6 4 1.800 5.600 5.700 7-3.900 1.300-5.100 3-5.700 7-.6-4-1.900-5.700-5.700-7 3.800-1.400 5.100-3 5.700-7z" fill="#fff" stroke="#f0822c" stroke-width="1.300" stroke-linejoin="round"/></svg><span class="t " style="font-size:13px;top:621px;color:#2b7fd0;left:925.11px;transform-origin:0 50%;transform:translateY(-50%) scaleX(1.018);">About Us</span><div class="a" style="left:1147.0px;top:613.5px;width:17px;height:17px;border:1.300px solid #c4c4c6;border-radius:50%"></div><div class="a" style="left:885px;top:642.5px;width:283px;height:1px;background:#e4e6ea"></div><svg class="a" style="left:889px;top:653px" width="26" height="26" viewBox="0 0 26 26"><circle cx="11.900" cy="8.100" r="7.400" fill="#0c6b6e"/><circle cx="19.300" cy="15.400" r="5.600" fill="#1a9db4"/><circle cx="13.700" cy="19.700" r="5" fill="#32c8d6"/><rect x="1" y="7.200" width="12.100" height="11.400" rx=".8" fill="#06585c"/><text x="7" y="16.200" font-size="8.500" font-weight="bold" fill="#fff" text-anchor="middle" font-family="Liberation Sans, sans-serif">S</text></svg><span class="t " style="font-size:13px;top:667px;color:#2b7fd0;left:924.11px;transform-origin:0 50%;transform:translateY(-50%) scaleX(1.008);">Industries</span><div class="a" style="left:1147.0px;top:659.5px;width:17px;height:17px;border:1.300px solid #c4c4c6;border-radius:50%"></div><div class="a" style="left:885px;top:688.5px;width:283px;height:1px;background:#e4e6ea"></div><svg class="a" style="left:889px;top:699px" width="26" height="26" viewBox="0 0 26 26"><circle cx="11.900" cy="8.100" r="7.400" fill="#0c6b6e"/><circle cx="19.300" cy="15.400" r="5.600" fill="#1a9db4"/><circle cx="13.700" cy="19.700" r="5" fill="#32c8d6"/><rect x="1" y="7.200" width="12.100" height="11.400" rx=".8" fill="#06585c"/><text x="7" y="16.200" font-size="8.500" font-weight="bold" fill="#fff" text-anchor="middle" font-family="Liberation Sans, sans-serif">S</text><path d="M19.500 1.700c.6 4 1.800 5.600 5.700 7-3.900 1.300-5.100 3-5.700 7-.6-4-1.900-5.700-5.700-7 3.800-1.400 5.100-3 5.700-7z" fill="#fff" stroke="#f0822c" stroke-width="1.300" stroke-linejoin="round"/></svg><span class="t " style="font-size:13px;top:713px;color:#2b7fd0;left:925.11px;transform-origin:0 50%;transform:translateY(-50%) scaleX(0.992);">Capabilities</span><div class="a" style="left:1147.0px;top:705.5px;width:17px;height:17px;border:1.300px solid #c4c4c6;border-radius:50%"></div><div class="a" style="left:885px;top:734.5px;width:283px;height:1px;background:#e4e6ea"></div><div class="a" style="left:876px;top:740px;width:292px;height:24px;overflow:hidden"><svg class="a" style="left:14px;top:7.500px" width="24" height="18" viewBox="0 0 24 18"><path d="M1.500 16.500V3.500a2 2 0 0 1 2-2h17a2 2 0 0 1 2 2V16.500" fill="none" stroke="#444" stroke-width="1.500"/><path d="M1.500 16l7-5.500 4.500 3.800 3.200-2.800 6.300 4.500" fill="none" stroke="#444" stroke-width="1.500" stroke-linejoin="round"/><circle cx="16.300" cy="6.800" r="1.500" fill="none" stroke="#444" stroke-width="1.100"/></svg><span class="t " style="font-size:13px;top:19px;color:#2b7fd0;left:48.11px;transform-origin:0 50%;transform:translateY(-50%) scaleX(0.987);">Image Library</span><div class="a" style="left:271px;top:11px;width:17px;height:17px;border:1.300px solid #c4c4c6;border-radius:50%"></div></div><div class="a" style="left:2px;top:790px;width:1207px;height:1px;background:#d6d6d8"></div><div class="a" style="left:2px;top:791px;width:1207px;height:21px;background:#f4f4f4"></div><div class="a" style="left:0px;top:812px;width:1210px;height:1px;background:#2a2a2a"></div><span class="t " style="font-size:11.5px;top:803.3px;color:#3c3c3c;left:13.65px;transform-origin:0 50%;transform:translateY(-50%) scaleX(0.972);">Page 1 of 1</span><span class="t " style="font-size:11.5px;top:803.3px;color:#3c3c3c;left:89.95px;transform-origin:0 50%;transform:translateY(-50%) scaleX(1.021);">0 words</span><svg class="a" style="left:150px;top:796px" width="14" height="13" viewBox="0 0 14 13"><path d="M1 1.500h4.500c.8 0 1.500.5 1.500 1.300 0-.8.700-1.300 1.500-1.300H13v9H8.500c-.8 0-1.500.4-1.500 1 0-.6-.7-1-1.500-1H1z" fill="none" stroke="#444" stroke-width="1"/><path d="M7 2.800v8.700" stroke="#444" stroke-width=".9"/><path d="M6.800 9.300l2.400 2.700 4-4.500" fill="none" stroke="#444" stroke-width="1.100"/></svg><span class="t " style="font-size:11.5px;top:803.3px;color:#3c3c3c;left:181.66px;transform-origin:0 50%;transform:translateY(-50%) scaleX(0.990);">English (United States)</span><span class="t " style="font-size:11.5px;top:803.3px;color:#3c3c3c;left:315.65px;transform-origin:0 50%;transform:translateY(-50%) scaleX(0.989);">Text Predictions: On</span><svg class="a" style="left:437px;top:794.500px" width="16" height="14" viewBox="0 0 16 14"><circle cx="6" cy="2.200" r="1.700" fill="none" stroke="#3c3c3c" stroke-width="1.100"/><path d="M.8 6.200c.2-1.600 1.300-2 2.600-2h5.200c1.300 0 2.400.4 2.600 2" fill="none" stroke="#3c3c3c" stroke-width="1.100"/><path d="M4.300 4.500v5c0 1.800-.5 3-1.800 3.800M7.700 4.500V8" fill="none" stroke="#3c3c3c" stroke-width="1.100"/><path d="M7.200 9.800l2.400 2.600 4.600-5.200" fill="none" stroke="#3c3c3c" stroke-width="1.200"/></svg><span class="t " style="font-size:11.5px;top:803.3px;color:#3c3c3c;left:453.65px;transform-origin:0 50%;transform:translateY(-50%) scaleX(1.011);">Accessibility: Good to go</span><svg class="a" style="left:722px;top:795px" width="17" height="14" viewBox="0 0 17 14"><path d="M8 9.500H1.500v-8h11V5" fill="none" stroke="#444" stroke-width="1"/><path d="M4 12h3" stroke="#444"/><circle cx="11.500" cy="9.500" r="2.600" fill="none" stroke="#444" stroke-width="1.600" stroke-dasharray="1.300 .9"/><circle cx="11.500" cy="9.500" r="1" fill="#444"/></svg><span class="t " style="font-size:11.5px;top:803.3px;color:#3c3c3c;left:739.95px;transform-origin:0 50%;transform:translateY(-50%) scaleX(0.994);">Display Settings</span><svg class="a" style="left:839px;top:795px" width="14" height="14" viewBox="0 0 14 14"><path d="M.5 3V.500H3M11 .500h2.500V3M13.500 11v2.500H11M3 13.500H.500V11" fill="none" stroke="#444"/><path d="M3.500 2.800h4.500l2.500 2.500v6H3.500z" fill="none" stroke="#3c3c3c" stroke-width="1.100"/><path d="M7.800 2.800v2.700h2.700" fill="none" stroke="#3c3c3c" stroke-width=".9"/></svg><span class="t " style="font-size:11.5px;top:803.3px;color:#3c3c3c;left:855.95px;transform-origin:0 50%;transform:translateY(-50%) scaleX(0.953);">Focus</span><svg class="a" style="left:911px;top:795px" width="13" height="13" viewBox="0 0 13 13"><path d="M1 1.500h4.500c.6 0 1 .4 1 1 0-.6.400-1 1-1H12v10H7.500c-.6 0-1 .3-1 .8 0-.5-.4-.8-1-.8H1z" fill="#dcdcde" stroke="#3c3c3c" stroke-width="1.200"/><path d="M6.500 2.500v9.500" stroke="#444"/><path d="M2.500 4h2.500M2.500 6h2.500M2.500 8h2.500M8 4h2.500M8 6h2.500M8 8h2.500" stroke="#888" stroke-width=".7"/></svg><div class="a" style="left:938px;top:791px;width:40px;height:21px;background:#d9d9db"></div><svg class="a" style="left:951px;top:795px" width="12" height="14" viewBox="0 0 12 14"><rect x="1" y=".5" width="10" height="13" fill="#a2a2a4" stroke="#3c3c3c" stroke-width="1.200"/><rect x="2.200" y="1.700" width="7.600" height="10.600" fill="none" stroke="#c9c9cb" stroke-width=".7"/></svg><svg class="a" style="left:990px;top:795px" width="15" height="14" viewBox="0 0 15 14"><rect x="1" y=".5" width="10" height="12.500" fill="#fff" stroke="#444"/><path d="M2.500 3h7M2.500 5h7" stroke="#777" stroke-width=".8"/><circle cx="9.500" cy="9.500" r="3.800" fill="#555"/><path d="M5.700 9.500h7.600M9.500 5.700v7.600" stroke="#eee" stroke-width=".6"/><ellipse cx="9.500" cy="9.500" rx="1.700" ry="3.800" fill="none" stroke="#eee" stroke-width=".6"/></svg><div class="a" style="left:1023px;top:802px;width:8px;height:1px;background:#444"></div><div class="a" style="left:1037px;top:801.5px;width:101px;height:1.3px;background:#8a8a8a"></div><div class="a" style="left:1087px;top:799px;width:1px;height:7px;background:#8a8a8a"></div><div class="a" style="left:1075px;top:796px;width:4px;height:12px;background:#555"></div><div class="a" style="left:1142px;top:802px;width:7px;height:1px;background:#444"></div><div class="a" style="left:1145px;top:799px;width:1px;height:7px;background:#444"></div><span class="t " style="font-size:11.5px;top:803.3px;color:#3c3c3c;left:1162.65px;transform-origin:0 50%;transform:translateY(-50%) scaleX(0.949);">80%</span><div class="a" style="left:0;top:0;width:1px;height:813px;background:#ecebea"></div>
<div class="a" style="left:1px;top:0;width:1px;height:813px;background:#6e6e70"></div>
<div class="a" style="left:2px;top:47px;width:1px;height:765px;background:#f8f8fa"></div>
<div class="a" style="left:1208px;top:47px;width:1px;height:765px;background:#f9f9fb"></div>
<div class="a" style="left:1209px;top:0;width:1px;height:813px;background:#707074"></div>
</div></body></html>
